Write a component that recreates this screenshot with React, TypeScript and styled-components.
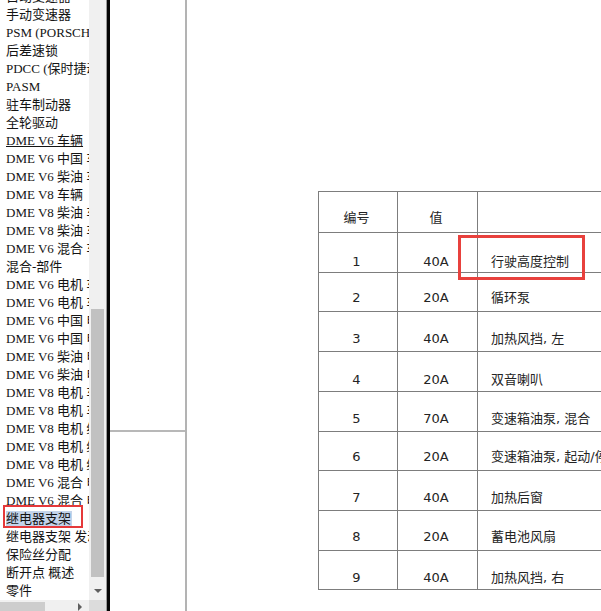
import React from 'react';
import styled, { createGlobalStyle } from 'styled-components';

const GlobalStyle = createGlobalStyle`
  html, body {
    margin: 0;
    padding: 0;
    background: #ffffff;
    overflow: hidden;
  }
`;

const Frame = styled.div`
  display: flex;
  width: 601px;
  height: 611px;
  overflow: hidden;
  background: #ffffff;
`;

/* ---------- left tree pane ---------- */

const Sidebar = styled.div`
  display: grid;
  grid-template-columns: 89px 17px;
  grid-template-rows: 600px 17px;
  flex: none;
  width: 106px;
`;

const TreeList = styled.div`
  overflow: hidden;
  background: #ffffff;
  font-family: 'Liberation Serif', 'Noto Sans CJK SC', serif;
  font-size: 13px;
  line-height: 18px;
  color: #141414;
`;

const TreeInner = styled.ul`
  list-style: none;
  margin: -12px 0 0 0;
  padding: 0;
`;

const TreeItem = styled.li<{ $active?: boolean }>`
  position: relative;
  height: 18px;
  padding-left: 6px;
  white-space: nowrap;

  span {
    text-decoration: ${({ $active }) => ($active ? 'underline' : 'none')};
  }
`;

const Selected = styled.span`
  background: #c3d3ea;
  padding-right: 1px;
`;

const Marker = styled.div`
  position: absolute;
  left: 3px;
  top: -5px;
  width: 80px;
  height: 23px;
  box-sizing: border-box;
  border: 2px solid #e5393a;
`;

const VScroll = styled.div`
  display: flex;
  flex-direction: column;
  align-items: center;
  background: #f0f0f0;
`;

const VThumb = styled.div`
  margin-top: 309px;
  width: 13px;
  height: 268px;
  background: #c1c1c1;
`;

const DownArrow = styled.div`
  margin-top: 12px;
  width: 0;
  height: 0;
  border-left: 4px solid transparent;
  border-right: 4px solid transparent;
  border-top: 4px solid #5f5f5f;
`;

const HScroll = styled.div`
  display: flex;
  align-items: flex-start;
  background: #f0f0f0;
`;

const HThumb = styled.div`
  margin-top: 2px;
  width: 45px;
  height: 13px;
  background: #cdcdcd;
`;

const RightArrow = styled.div`
  margin: 3px 0 0 33px;
  width: 0;
  height: 0;
  border-top: 4px solid transparent;
  border-bottom: 4px solid transparent;
  border-left: 4px solid #5f5f5f;
`;

const Corner = styled.div`
  background: #dcdcdc;
`;

const Splitter = styled.div`
  flex: none;
  width: 3px;
  border-left: 1px solid #9a9a9a;
  background: #050505;
`;

/* ---------- document viewer ---------- */

const Viewer = styled.div`
  display: flex;
  flex: 1;
  overflow: hidden;
  background: #ffffff;
`;

const Gutter = styled.div`
  flex: none;
  width: 75px;
  border-right: 2px solid #b3b3b3;
`;

const GutterCell = styled.div`
  height: 430px;
  border-bottom: 2px solid #b8b8b8;
`;

const Page = styled.div`
  flex: 1;
  padding: 191px 0 0 131px;
`;

const TableWrap = styled.div`
  position: relative;
  display: grid;
  grid-template-columns: 79px 80px 220px;
  width: max-content;
  border-left: 1px solid #7d7d7d;
  border-top: 1px solid #7d7d7d;
  font-family: 'DejaVu Sans', 'Noto Sans CJK SC', sans-serif;
  font-size: 13px;
  line-height: 16px;
  color: #242424;
`;

const Cell = styled.div<{ $h: number; $pt: number; $align?: 'center' | 'left' }>`
  box-sizing: border-box;
  height: ${({ $h }) => $h}px;
  padding-top: ${({ $pt }) => $pt}px;
  padding-left: ${({ $align }) => ($align === 'left' ? '13px' : '0')};
  padding-right: ${({ $align }) => ($align === 'left' ? '0' : '3px')};
  text-align: ${({ $align }) => $align ?? 'center'};
  border-right: 1px solid #7d7d7d;
  border-bottom: 1px solid #7d7d7d;
  white-space: nowrap;
`;

const Callout = styled.div`
  position: absolute;
  left: 139px;
  top: 43px;
  width: 127px;
  height: 45px;
  box-sizing: border-box;
  border: 3px solid #e8413d;
`;

const treeItems = [
  '自动变速器',
  '手动变速器',
  'PSM (PORSCHE 稳定管理系统)',
  '后差速锁',
  'PDCC (保时捷动态底盘控制系统)',
  'PASM',
  '驻车制动器',
  '全轮驱动',
  'DME V6 车辆',
  'DME V6 中国 车辆',
  'DME V6 柴油 车辆',
  'DME V8 车辆',
  'DME V8 柴油 车辆',
  'DME V8 柴油 车辆',
  'DME V6 混合 车辆',
  '混合-部件',
  'DME V6 电机 车辆',
  'DME V6 电机 车辆',
  'DME V6 中国 电机',
  'DME V6 中国 电机',
  'DME V6 柴油 电机',
  'DME V6 柴油 电机',
  'DME V8 电机 车辆',
  'DME V8 电机 车辆',
  'DME V8 电机 线路',
  'DME V8 电机 线路',
  'DME V8 电机 线路',
  'DME V6 混合 电机',
  'DME V6 混合 电机',
  '继电器支架',
  '继电器支架 发动机舱',
  '保险丝分配',
  '断开点 概述',
  '零件',
];

const LINK_INDEX = 8;
const SELECTED_INDEX = 29;

const fuses = [
  { no: '1', amp: '40A', name: '行驶高度控制', h: 40, pt: 21 },
  { no: '2', amp: '20A', name: '循环泵', h: 39, pt: 17 },
  { no: '3', amp: '40A', name: '加热风挡, 左', h: 40, pt: 19 },
  { no: '4', amp: '20A', name: '双音喇叭', h: 40, pt: 20 },
  { no: '5', amp: '70A', name: '变速箱油泵, 混合', h: 40, pt: 19 },
  { no: '6', amp: '20A', name: '变速箱油泵, 起动/停止', h: 39, pt: 17 },
  { no: '7', amp: '40A', name: '加热后窗', h: 40, pt: 19 },
  { no: '8', amp: '20A', name: '蓄电池风扇', h: 40, pt: 18 },
  { no: '9', amp: '40A', name: '加热风挡, 右', h: 39, pt: 19 },
];

const App: React.FC = () => {
  return (
    <>
      <GlobalStyle />
      <Frame>
        <Sidebar>
          <TreeList>
            <TreeInner>
              {treeItems.map((label, i) => (
                <TreeItem key={i} $active={i === LINK_INDEX}>
                  {i === SELECTED_INDEX ? (
                    <>
                      <Selected>{label}</Selected>
                      <Marker />
                    </>
                  ) : (
                    <span>{label}</span>
                  )}
                </TreeItem>
              ))}
            </TreeInner>
          </TreeList>
          <VScroll>
            <VThumb />
            <DownArrow />
          </VScroll>
          <HScroll>
            <HThumb />
            <RightArrow />
          </HScroll>
          <Corner />
        </Sidebar>

        <Splitter />

        <Viewer>
          <Gutter>
            <GutterCell />
          </Gutter>
          <Page>
            <TableWrap>
              <Cell $h={41} $pt={18}>编号</Cell>
              <Cell $h={41} $pt={18}>值</Cell>
              <Cell $h={41} $pt={18} $align="left"></Cell>
              {fuses.map((f) => (
                <React.Fragment key={f.no}>
                  <Cell $h={f.h} $pt={f.pt}>{f.no}</Cell>
                  <Cell $h={f.h} $pt={f.pt}>{f.amp}</Cell>
                  <Cell $h={f.h} $pt={f.pt} $align="left">{f.name}</Cell>
                </React.Fragment>
              ))}
              <Callout />
            </TableWrap>
          </Page>
        </Viewer>
      </Frame>
    </>
  );
};

export default App;
